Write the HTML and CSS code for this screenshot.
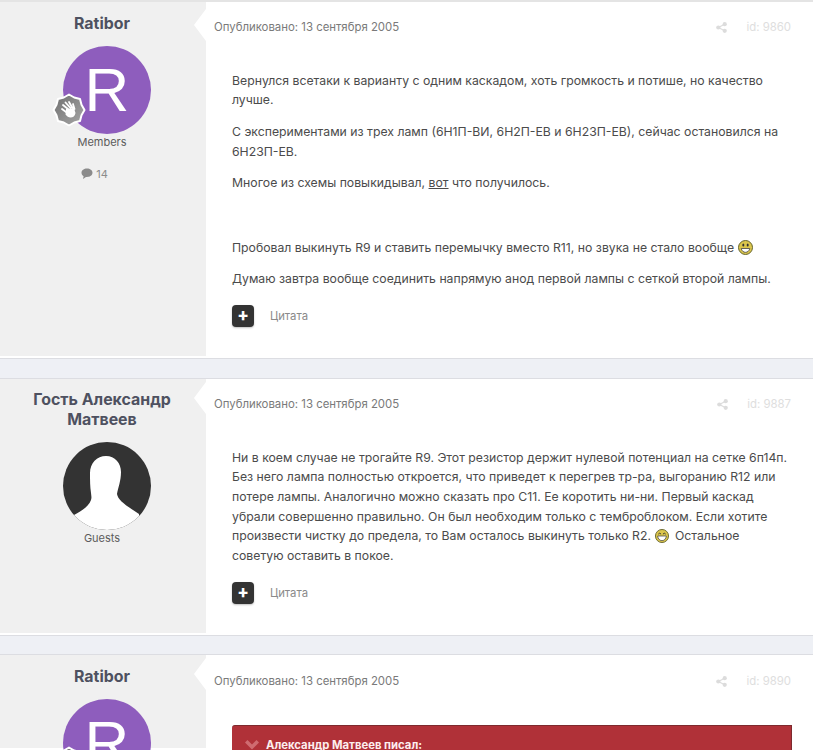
FILE: index.html
```html
<!DOCTYPE html>
<html lang="ru">
<head>
<meta charset="utf-8">
<title>Тема</title>
<link rel="stylesheet" href="styles.css">
</head>
<body>
<article class="post post-first">
  <aside class="author">
    <h3 class="name">Ratibor</h3>
    <div class="avatar avatar-r">R
      <svg class="rank" viewBox="0 0 34 34" width="34" height="34"><defs><linearGradient id="rank-fill" x1="0" y1="0" x2="1" y2="1"><stop offset="0" stop-color="#6f6f6f"/><stop offset="1" stop-color="#a8a8a8"/></linearGradient></defs><path d="M32.500 17L29.500 11.800 28 6 22.200 4.500 17 1.500 11.800 4.500 6 6 4.500 11.800 1.500 17 4.500 22.200 6 28 11.800 29.500 17 32.500 22.200 29.500 28 28 29.500 22.200z" fill="url(#rank-fill)" stroke="#fff" stroke-width="2" stroke-linejoin="round"/><path d="M11 12l5 4M13.500 9.500l5 5.500M17 9l3.500 6M21 11l1.500 5M10 16l4 3" stroke="#fff" stroke-width="1.800" stroke-linecap="round" fill="none"/><path d="M14 16l8-1 1.500 5c-.5 3-2.500 4.500-5 4.500-2 0-3.500-1-5-3z" fill="#fff"/></svg>
    </div>
    <div class="group">Members</div>
    <div class="count"><svg class="bubble" viewBox="0 0 12 11" width="12" height="11"><path d="M6 .5c3 0 5.500 1.800 5.500 4.200S9 8.900 6 8.900H5l-3 2 .6-2.700C1.200 7.500.5 6.200.5 4.700.5 2.300 3 .5 6 .5z" fill="#8b8b8b"/></svg> 14</div>
  </aside>
  <div class="main">
    <header class="meta">
      <span class="date">Опубликовано: 13 сентября 2005</span>
      <span class="tools">
        <svg class="share" viewBox="0 0 12 12" width="11" height="11"><circle cx="2.500" cy="6" r="2.300"/><circle cx="9.500" cy="2.400" r="2.300"/><circle cx="9.500" cy="9.600" r="2.300"/><path d="M2.500 6l7-3.600M2.500 6l7 3.600" stroke="#dcdcdc" stroke-width="1.300"/></svg>
        <span class="pid">id: 9860</span>
      </span>
    </header>
    <div class="body">
      <p>Вернулся всетаки к варианту с одним каскадом, хоть громкость и потише, но качество лучше.</p>
      <p>С экспериментами из трех ламп (6Н1П-ВИ, 6Н2П-ЕВ и 6Н23П-ЕВ), сейчас остановился на 6Н23П-ЕВ.</p>
      <p>Многое из схемы повыкидывал, <u>вот</u> что получилось.</p>
      <p class="blank">&nbsp;</p>
      <p>Пробовал выкинуть R9 и ставить перемычку вместо R11, но звука не стало вообще <svg class="smile" viewBox="0 0 15 15" width="15" height="15"><circle cx="7.500" cy="7.500" r="7" fill="#dcc64c" stroke="#66652c"/><ellipse cx="5.300" cy="5" rx="1" ry="1.500" fill="#333"/><ellipse cx="9.700" cy="5" rx="1" ry="1.500" fill="#333"/><path d="M3.200 8.500h8.600c-.5 2.500-2.400 3.800-4.300 3.800S3.700 11 3.200 8.500z" fill="#fff" stroke="#444" stroke-width=".8"/></svg></p>
      <p>Думаю завтра вообще соединить напрямую анод первой лампы с сеткой второй лампы.</p>
    </div>
    <footer class="actions"><span class="plus">+</span><span class="quote">Цитата</span></footer>
  </div>
</article>
<article class="post post-second">
  <aside class="author">
    <h3 class="name">Гость Александр Матвеев</h3>
    <div class="avatar avatar-g">
      <svg viewBox="0 0 88 88" width="88" height="88"><path d="M43 14c9 0 15 7 15 16 0 9-3 16-4 22 1 6 8 11 22 20v16H11V73c9-5 15-9 17-15 1-3 0-5 0-7-1-6-1-13-1-20 0-10 7-17 16-17z" fill="#fff"/></svg>
    </div>
    <div class="group">Guests</div>
  </aside>
  <div class="main">
    <header class="meta">
      <span class="date">Опубликовано: 13 сентября 2005</span>
      <span class="tools">
        <svg class="share" viewBox="0 0 12 12" width="11" height="11"><circle cx="2.500" cy="6" r="2.300"/><circle cx="9.500" cy="2.400" r="2.300"/><circle cx="9.500" cy="9.600" r="2.300"/><path d="M2.500 6l7-3.600M2.500 6l7 3.600" stroke="#dcdcdc" stroke-width="1.300"/></svg>
        <span class="pid">id: 9887</span>
      </span>
    </header>
    <div class="body">
      <p>Ни в коем случае не трогайте R9. Этот резистор держит нулевой потенциал на сетке 6п14п. Без него лампа полностью откроется, что приведет к перегрев тр-ра, выгоранию R12 или потере лампы. Аналогично можно сказать про С11. Ее коротить ни-ни. Первый каскад убрали совершенно правильно. Он был необходим только с темброблоком. Если хотите произвести чистку до предела, то Вам осталось выкинуть только R2. <svg class="smile smile-laugh" viewBox="0 0 15 15" width="14" height="14"><circle cx="7.500" cy="7.500" r="7" fill="#dcc64c" stroke="#66652c"/><path d="M3.500 5.500q1.500-2 3 0M8.500 5.500q1.500-2 3 0" stroke="#333" fill="none"/><path d="M2.800 7.500h9.400c-.3 3-2.500 5-4.700 5s-4.400-2-4.700-5z" fill="#fff" stroke="#444" stroke-width=".8"/></svg> Остальное<br>советую оставить в покое.</p>
    </div>
    <footer class="actions"><span class="plus">+</span><span class="quote">Цитата</span></footer>
  </div>
</article>
<article class="post post-third">
  <aside class="author">
    <h3 class="name">Ratibor</h3>
    <div class="avatar avatar-r">R
      <svg class="rank" viewBox="0 0 34 34" width="34" height="34"><path d="M32.500 17L29.500 11.800 28 6 22.200 4.500 17 1.500 11.800 4.500 6 6 4.500 11.800 1.500 17 4.500 22.200 6 28 11.800 29.500 17 32.500 22.200 29.500 28 28 29.500 22.200z" fill="url(#rank-fill)" stroke="#fff" stroke-width="2" stroke-linejoin="round"/></svg>
    </div>
  </aside>
  <div class="main">
    <header class="meta">
      <span class="date">Опубликовано: 13 сентября 2005</span>
      <span class="tools">
        <svg class="share" viewBox="0 0 12 12" width="11" height="11"><circle cx="2.500" cy="6" r="2.300"/><circle cx="9.500" cy="2.400" r="2.300"/><circle cx="9.500" cy="9.600" r="2.300"/><path d="M2.500 6l7-3.600M2.500 6l7 3.600" stroke="#dcdcdc" stroke-width="1.300"/></svg>
        <span class="pid">id: 9890</span>
      </span>
    </header>
    <div class="body body-quote">
      <div class="citation"><svg class="chev" viewBox="0 0 14 10" width="14" height="10"><path d="M0 2.500L2.500 0 7 4.500 11.500 0 14 2.500 7 9.500z" fill="#cf6b70"/></svg>Александр Матвеев писал:</div>
    </div>
  </div>
</article>
</body>
</html>
```
FILE: styles.css
```css
* { box-sizing: border-box; }
html, body { margin: 0; height: 750px; overflow: hidden; }
body {
  background: #eef0f5;
  font-family: Inter, "Noto Sans", sans-serif;
  color: #4b4b4b;
}
.post {
  display: flex;
  background: #fff;
  border-top: 1px solid #dcdde2;
  border-bottom: 1px solid #dcdde2;
}
.post-first { height: 359px; margin-bottom: 19px; border-top: 2px solid #e4e4e4; }
.post-second { height: 258px; margin-bottom: 18px; }
.post-third { height: 96px; border-bottom: 0; }
.author {
  position: relative;
  width: 206px;
  flex: none;
  margin-bottom: 2px;
  background: #f0f0f0;
  text-align: center;
  padding: 12px 2px 0 0;
}
.post-second .author { padding-top: 11px; }
.author::after {
  content: "";
  position: absolute;
  right: 0;
  top: 3px;
  border-style: solid;
  border-color: transparent #fff transparent transparent;
  border-width: 16px 12px 16px 0;
}
.post-first .author::after { top: 7px; }
.name {
  margin: 0;
  padding: 0 20px;
  font-size: 15.900px;
  line-height: 20px;
  font-weight: 700;
  color: #4e5160;
}
.avatar {
  position: relative;
  width: 88px;
  height: 88px;
  margin: 12px auto 0;
  left: 5px;
  border-radius: 50%;
}
.avatar-r {
  background: #8e5dbd;
  color: #fff;
  font-family: "Liberation Sans", sans-serif;
  font-size: 62px;
  line-height: 88px;
}
.avatar-g { background: #333; overflow: hidden; }
.avatar-g svg { display: block; }
.rank { position: absolute; left: -11px; top: 47px; }
.group { font-size: 11px; line-height: 14px; color: #5c5c5c; margin-top: 1px; }
.count { font-size: 11px; line-height: 14px; color: #8b8b8b; margin-top: 18px; padding-right: 15px; }
.bubble { vertical-align: -1px; }
.main { flex: 1; min-width: 0; padding: 0 22px 0 8px; }
.meta {
  display: flex;
  justify-content: space-between;
  align-items: center;
  height: 20px;
  margin-top: 15px;
  font-size: 11.400px;
}
.post-third .meta { margin-top: 16px; }
.date { color: #7a7a7a; }
.tools { display: flex; align-items: center; gap: 19px; }
.share { fill: #dcdcdc; }
.pid { color: #dedede; }
.body { padding: 33.500px 0 0 18px; font-size: 12.250px; line-height: 19.700px; color: #4b4b4b; }
.body p { margin: 0 0 12px; }
.body .blank { margin-bottom: 13px; }
.smile { vertical-align: -3px; }
.smile-laugh { margin: 0 2px 0 1px; }
.actions { display: flex; align-items: center; gap: 16px; margin: 16px 0 0 18px; }
.plus {
  width: 22px;
  height: 22px;
  border-radius: 4px;
  background: #333;
  color: #fff;
  font-weight: 800;
  font-size: 17px;
  line-height: 21px;
  text-align: center;
  box-shadow: 0 1px 2px rgba(0,0,0,.25);
}
.quote { font-size: 11.300px; color: #8a8a8a; }
.body-quote { margin-right: -1px; }
.citation {
  height: 60px;
  background: #b03138;
  border-radius: 3px 0 0 0;
  border-top: 1px solid #7e2a2e;
  border-right: 1px solid #7e2a2e;
  padding: 11px 0 0 13px;
  color: #fdeeee;
  font-weight: 700;
  font-size: 11.300px;
  line-height: 16px;
}
.chev { margin-right: 7px; vertical-align: -1px; }
```
